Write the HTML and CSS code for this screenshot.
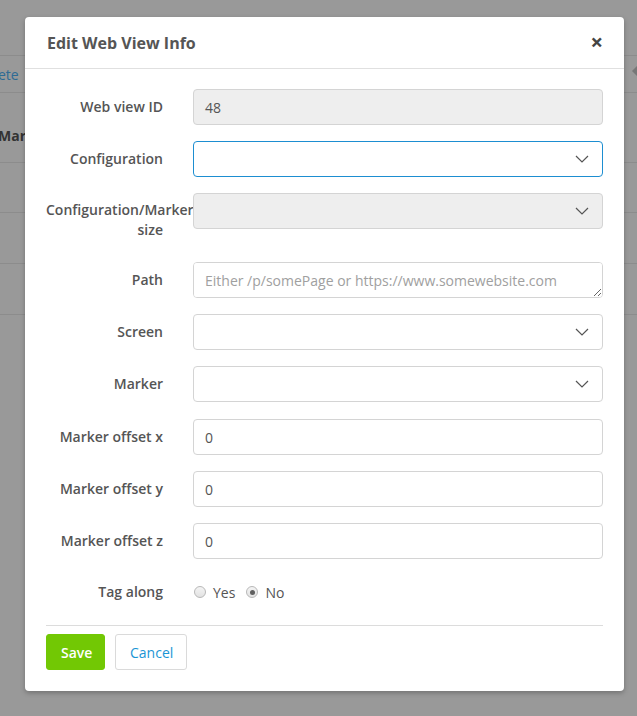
FILE: index.html
```html
<!DOCTYPE html>
<html>
<head>
<meta charset="utf-8">
<link rel="stylesheet" href="styles.css">
</head>
<body>
<div class="page">
  <div class="bg-table">
    <div class="bg-row bg-top"><a class="bg-link">ete</a></div>
    <div class="bg-row bg-head"><span>Mar</span></div>
    <div class="bg-row r1"></div>
    <div class="bg-row"></div>
    <div class="bg-row"></div>
  </div>
  <div class="bg-arrow"></div>
</div>

<div class="modal">
  <div class="modal-header">
    <h4 class="modal-title">Edit Web View Info</h4>
    <span class="close">&times;</span>
  </div>
  <div class="modal-body">
    <div class="form-row">
      <label class="lbl">Web view ID</label>
      <div class="ctl"><div class="input disabled">48</div></div>
    </div>
    <div class="form-row">
      <label class="lbl">Configuration</label>
      <div class="ctl"><div class="input select focus">
        <svg class="chev" width="14" height="8" viewBox="0 0 14 8"><polyline points="1,1 7,7 13,1" fill="none" stroke="#555" stroke-width="1.2"/></svg>
      </div></div>
    </div>
    <div class="form-row">
      <label class="lbl tall">Configuration/Marker size</label>
      <div class="ctl"><div class="input select disabled">
        <svg class="chev" width="14" height="8" viewBox="0 0 14 8"><polyline points="1,1 7,7 13,1" fill="none" stroke="#555" stroke-width="1.2"/></svg>
      </div></div>
    </div>
    <div class="form-row">
      <label class="lbl">Path</label>
      <div class="ctl"><textarea class="input area" rows="1" placeholder="Either /p/somePage or https://www.somewebsite.com"></textarea></div>
    </div>
    <div class="form-row">
      <label class="lbl">Screen</label>
      <div class="ctl"><div class="input select">
        <svg class="chev" width="14" height="8" viewBox="0 0 14 8"><polyline points="1,1 7,7 13,1" fill="none" stroke="#555" stroke-width="1.2"/></svg>
      </div></div>
    </div>
    <div class="form-row marker-row">
      <label class="lbl">Marker</label>
      <div class="ctl"><div class="input select">
        <svg class="chev" width="14" height="8" viewBox="0 0 14 8"><polyline points="1,1 7,7 13,1" fill="none" stroke="#555" stroke-width="1.2"/></svg>
      </div></div>
    </div>
    <div class="form-row">
      <label class="lbl">Marker offset x</label>
      <div class="ctl"><div class="input">0</div></div>
    </div>
    <div class="form-row">
      <label class="lbl">Marker offset y</label>
      <div class="ctl"><div class="input">0</div></div>
    </div>
    <div class="form-row">
      <label class="lbl">Marker offset z</label>
      <div class="ctl"><div class="input">0</div></div>
    </div>
    <div class="form-row radio-row">
      <label class="lbl">Tag along</label>
      <div class="ctl radios">
        <span class="radio"></span><span class="rtext">Yes</span>
        <span class="radio checked"></span><span class="rtext">No</span>
      </div>
    </div>
    <hr class="divider">
    <div class="actions">
      <button class="btn btn-save">Save</button>
      <button class="btn btn-cancel">Cancel</button>
    </div>
  </div>
</div>
</body>
</html>
```

FILE: styles.css
```css
html, body {
  margin: 0;
  padding: 0;
}
body {
  width: 637px;
  height: 716px;
  background: #999999;
  font-family: "Open Sans", "Liberation Sans", sans-serif;
  font-size: 14px;
  color: #555;
  overflow: hidden;
  position: relative;
}
.page {
  padding-top: 55px;
}
.bg-table {
  display: flex;
  flex-direction: column;
}
.bg-row {
  height: 50px;
  border-top: 1px solid #8c8c8c;
}
.bg-top {
  height: 36px;
  display: flex;
  align-items: center;
}
.bg-link {
  color: #2e6b94;
  font-size: 14px;
  margin-left: -2px;
}
.bg-head {
  height: 69px;
}
.bg-head span {
  display: block;
  margin-top: 33px;
  font-weight: 700;
  color: #333;
  margin-left: -2px;
}
.bg-row.r1 {
  height: 49px;
}
.bg-row:last-child {
  border-bottom: 1px solid #8c8c8c;
}
.bg-arrow {
  position: absolute;
  left: 632px;
  top: 66px;
  width: 0;
  height: 0;
  border-top: 5px solid transparent;
  border-bottom: 5px solid transparent;
  border-right: 5px solid #777;
}

.modal {
  position: absolute;
  left: 25px;
  top: 17px;
  width: 599px;
  height: 674px;
  box-sizing: border-box;
  background: #fff;
  border-radius: 4px;
  box-shadow: 0 2px 5px rgba(0,0,0,0.25);
}
.modal-header {
  height: 52px;
  box-sizing: border-box;
  border-bottom: 1px solid #e0e0e0;
  display: flex;
  align-items: center;
  justify-content: space-between;
  padding: 0 21px 0 22px;
}
.modal-title {
  margin: 0;
  font-size: 16px;
  font-weight: 700;
  color: #555;
  padding-top: 1px;
}
.close {
  font-size: 22px;
  font-weight: 700;
  color: #444;
  line-height: 1;
  margin-top: -4px;
}
.modal-body {
  padding: 20px 20px 0 21px;
}
.form-row {
  display: flex;
  margin-bottom: 16px;
}
.marker-row {
  margin-bottom: 17px;
}
.lbl {
  width: 117px;
  flex: none;
  text-align: right;
  font-weight: 600;
  color: #555;
  padding-top: 8px;
  padding-bottom: 5px;
  line-height: 20px;
}
.lbl.tall {
  padding-top: 7px;
  padding-bottom: 6px;
}
.ctl {
  margin-left: 30px;
  flex: 1;
}
.input {
  box-sizing: border-box;
  width: 410px;
  height: 36px;
  border: 1px solid #d4d4d4;
  border-radius: 4px;
  background: #fff;
  padding: 0 11px;
  display: flex;
  align-items: center;
  font-family: "Open Sans", "Liberation Sans", sans-serif;
  font-size: 14px;
  color: #555;
}
.input.disabled {
  background: #eeeeee;
}
.input.focus {
  border-color: #1d8ed1;
}
.select {
  justify-content: flex-end;
  padding-right: 13px;
}
.chev {
  display: block;
}
.area {
  display: block;
  resize: vertical;
  padding: 8px 11px;
  line-height: 19px;
  outline: none;
  margin: 0;
}
.area::placeholder {
  color: #a0a0a0;
}
.radio-row {
  margin-bottom: 0;
  height: 34px;
}
.radio-row .lbl {
  padding-top: 7px;
}
.radios {
  display: flex;
  align-items: center;
  height: 34px;
  padding-left: 1px;
}
.radio {
  width: 12px;
  height: 12px;
  border-radius: 50%;
  border: 1px solid #b8b8b8;
  background: linear-gradient(#f4f4f4, #e2e2e2);
  box-sizing: border-box;
  display: flex;
  align-items: center;
  justify-content: center;
  margin-right: 7px;
}
.radio.checked::after {
  content: "";
  width: 5px;
  height: 5px;
  border-radius: 50%;
  background: #606060;
}
.rtext {
  margin-right: 11px;
  color: #555;
}
.divider {
  border: 0;
  border-top: 1px solid #dcdcdc;
  margin: 16px 0 8px 0;
  width: 557px;
}
.actions {
  display: flex;
  gap: 10px;
}
.btn {
  height: 36px;
  border-radius: 3px;
  font-family: "Open Sans", "Liberation Sans", sans-serif;
  font-size: 14px;
  padding: 0 14px;
  box-sizing: border-box;
}
.btn-save {
  width: 59px;
  background: #72c804;
  border: 1px solid #72c804;
  color: #fff;
  font-weight: 600;
}
.btn-cancel {
  width: 72px;
  background: #fff;
  border: 1px solid #dadada;
  color: #1a95d5;
}
```
